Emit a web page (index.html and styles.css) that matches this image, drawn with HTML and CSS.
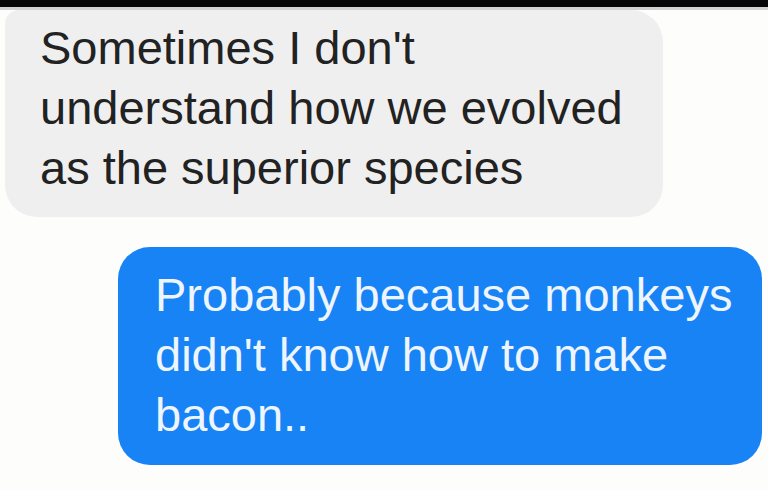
FILE: index.html
```html
<!DOCTYPE html>
<html>
<head>
<meta charset="utf-8">
<link rel="stylesheet" href="styles.css">
</head>
<body>
<div class="topbar"></div>
<div class="rule"></div>
<div class="thread">
  <div class="bubble incoming">Sometimes I don't<br>understand how we evolved<br>as the superior species</div>
  <div class="bubble outgoing">Probably because monkeys<br>didn't know how to make<br>bacon..</div>
</div>
</body>
</html>
```
FILE: styles.css
```css
html, body {
  margin: 0;
  padding: 0;
  background: #fdfdfc;
  width: 768px;
  height: 490px;
  overflow: hidden;
}
.topbar {
  height: 7px;
  background: #050505;
}
.rule {
  height: 3px;
  background: #cfd1d2;
}
.thread {
  display: flex;
  flex-direction: column;
  padding: 0 6px 0 5px;
  gap: 30px;
}
.bubble {
  box-sizing: border-box;
  font-family: "Liberation Sans", Arial, sans-serif;
  font-size: 47px;
  line-height: 60px;
  border-radius: 32px;
}
.incoming {
  align-self: flex-start;
  width: 658px;
  height: 207px;
  background: #efefef;
  color: #222;
  padding: 8px 0 0 35px;
  border-top-left-radius: 14px;
}
.outgoing {
  align-self: flex-end;
  width: 644px;
  height: 218px;
  background: #1783f4;
  color: #eef5ff;
  padding: 18px 0 0 37px;
}
```
